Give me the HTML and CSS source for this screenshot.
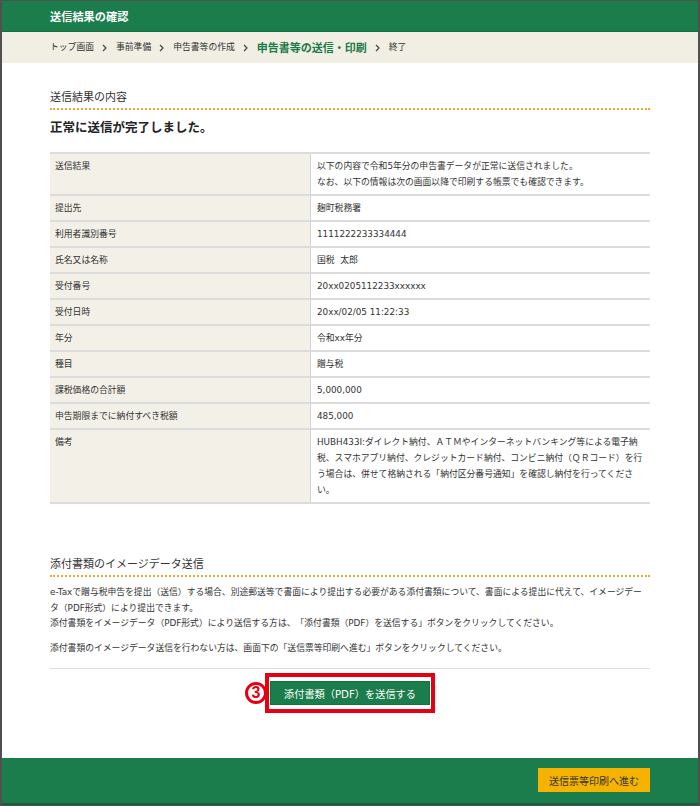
FILE: index.html
```html
<!DOCTYPE html>
<html lang="ja">
<head>
<meta charset="utf-8">
<title>送信結果の確認</title>
<link rel="stylesheet" href="styles.css">
</head>
<body>
<div class="page">
  <header class="titlebar">送信結果の確認</header>
  <nav class="crumbs">
    <span class="crumb">トップ画面</span>
    <svg class="sep" width="5" height="8" viewBox="0 0 5 8"><polyline points="1,1 4,4 1,7" fill="none" stroke="#444" stroke-width="1.2"/></svg>
    <span class="crumb">事前準備</span>
    <svg class="sep" width="5" height="8" viewBox="0 0 5 8"><polyline points="1,1 4,4 1,7" fill="none" stroke="#444" stroke-width="1.2"/></svg>
    <span class="crumb">申告書等の作成</span>
    <svg class="sep" width="5" height="8" viewBox="0 0 5 8"><polyline points="1,1 4,4 1,7" fill="none" stroke="#444" stroke-width="1.2"/></svg>
    <span class="crumb current">申告書等の送信・印刷</span>
    <svg class="sep" width="5" height="8" viewBox="0 0 5 8"><polyline points="1,1 4,4 1,7" fill="none" stroke="#444" stroke-width="1.2"/></svg>
    <span class="crumb">終了</span>
  </nav>
  <main class="content">
    <section class="sec sec-result">
      <h2 class="sec-title">送信結果の内容</h2>
      <p class="lead">正常に送信が完了しました。</p>
      <table class="result">
        <tr><td class="lbl">送信結果</td><td class="val">以下の内容で令和5年分の申告書データが正常に送信されました。<br>なお、以下の情報は次の画面以降で印刷する帳票でも確認できます。</td></tr>
        <tr><td class="lbl">提出先</td><td class="val">麹町税務署</td></tr>
        <tr><td class="lbl">利用者識別番号</td><td class="val">1111222233334444</td></tr>
        <tr><td class="lbl">氏名又は名称</td><td class="val">国税&nbsp;&nbsp;太郎</td></tr>
        <tr><td class="lbl">受付番号</td><td class="val">20xx0205112233xxxxxx</td></tr>
        <tr><td class="lbl">受付日時</td><td class="val">20xx/02/05 11:22:33</td></tr>
        <tr><td class="lbl">年分</td><td class="val">令和xx年分</td></tr>
        <tr><td class="lbl">種目</td><td class="val">贈与税</td></tr>
        <tr><td class="lbl">課税価格の合計額</td><td class="val">5,000,000</td></tr>
        <tr><td class="lbl">申告期限までに納付すべき税額</td><td class="val">485,000</td></tr>
        <tr><td class="lbl">備考</td><td class="val">HUBH433I:ダイレクト納付、ＡＴＭやインターネットバンキング等による電子納税、スマホアプリ納付、クレジットカード納付、コンビニ納付（ＱＲコード）を行う場合は、併せて格納される「納付区分番号通知」を確認し納付を行ってください。</td></tr>
      </table>
    </section>
    <section class="sec sec-attach">
      <h2 class="sec-title">添付書類のイメージデータ送信</h2>
      <p class="txt">e-Taxで贈与税申告を提出（送信）する場合、別途郵送等で書面により提出する必要がある添付書類について、書面による提出に代えて、イメージデータ（PDF形式）により提出できます。<br>添付書類をイメージデータ（PDF形式）により送信する方は、「添付書類（PDF）を送信する」ボタンをクリックしてください。</p>
      <p class="txt gap">添付書類のイメージデータ送信を行わない方は、画面下の「送信票等印刷へ進む」ボタンをクリックしてください。</p>
      <div class="actions">
        <div class="highlight">
          <span class="mark">3</span>
          <button class="btn-green" type="button">添付書類（PDF）を送信する</button>
        </div>
      </div>
    </section>
  </main>
  <footer class="footbar">
    <button class="btn-yellow" type="button">送信票等印刷へ進む</button>
  </footer>
</div>
</body>
</html>
```

FILE: styles.css
```css
* { box-sizing: border-box; }

html, body {
  margin: 0;
  padding: 0;
  background: #ffffff;
}

body {
  font-family: "DejaVu Sans", "Noto Sans CJK JP", sans-serif;
  color: #333333;
  text-spacing-trim: space-all;
}

.page {
  height: 806px;
  border-style: solid;
  border-color: #505050;
  border-width: 1px 2px 1px 2px;
  display: flex;
  flex-direction: column;
  background: #ffffff;
}

.titlebar {
  height: 31px;
  background: #1b7d4b;
  border-bottom: 1px solid #15703f;
  color: #ffffff;
  font-family: "Noto Sans CJK JP", sans-serif;
  font-weight: 700;
  font-size: 11.2px;
  display: flex;
  align-items: center;
  padding-left: 48px;
}

.crumbs {
  height: 31px;
  background: #f1eee4;
  display: flex;
  align-items: center;
  padding-left: 48px;
  font-family: "Noto Sans CJK JP", sans-serif;
  font-size: 8.8px;
  color: #333333;
}

.crumb { line-height: 1; }

.crumb.current {
  font-size: 11px;
  font-weight: 700;
  color: #1b7a48;
}

.sep {
  margin: 0 9px 0 8px;
  flex: none;
}

.content {
  flex: 1;
  padding: 0 48px;
}

.sec-title {
  margin: 0;
  font-family: "Noto Sans CJK JP", sans-serif;
  font-size: 11px;
  font-weight: 400;
  line-height: 16px;
  color: #333333;
  padding-bottom: 4px;
  border-bottom: 2px dotted #eea636;
}

.sec-result .sec-title { margin-top: 25px; }

.lead {
  margin: 8px 0 16px;
  font-family: "Noto Sans CJK JP", sans-serif;
  font-size: 12.5px;
  font-weight: 700;
  line-height: 18px;
  color: #222222;
}

.result {
  width: 100%;
  table-layout: fixed;
  border-collapse: separate;
  border-spacing: 0;
  border-top: 2px solid #dcdcdc;
  font-size: 8.8px;
  line-height: 16px;
}

.result td {
  vertical-align: top;
  border-bottom: 2px solid #dcdcdc;
  padding: 4px 6px;
}

.result td.lbl {
  width: 260px;
  background: #f2f0e7;
  padding-left: 5px;
}

.result td.val {
  background: #ffffff;
  border-left: 1px solid #d2d2d2;
}

.sec-attach .sec-title { margin-top: 51px; }

.txt {
  margin: 8px 0 0;
  font-size: 8.8px;
  line-height: 15.5px;
}

.txt.gap { margin-top: 9px; }

.actions {
  margin-top: 12px;
  border-top: 1px solid #dddddd;
  padding-top: 4px;
  display: flex;
  justify-content: center;
}

.highlight {
  position: relative;
  border: 4px solid #e60012;
  padding: 4px 1px;
  display: flex;
}

.mark {
  position: absolute;
  right: calc(100% + 2px);
  top: 50%;
  transform: translateY(-50%);
  width: 22px;
  height: 22px;
  border: 3px solid #e60012;
  border-radius: 50%;
  display: flex;
  align-items: center;
  justify-content: center;
  font-family: "Liberation Sans", sans-serif;
  font-size: 16px;
  font-weight: 700;
  line-height: 1;
  color: #e60012;
  background: #ffffff;
}

.btn-green {
  width: 160px;
  height: 24px;
  margin: 0;
  border: 1px solid #17713f;
  background: #1b7d4b;
  color: #ffffff;
  font-family: "DejaVu Sans", "Noto Sans CJK JP", sans-serif;
  font-size: 10.2px;
  padding: 0;
  cursor: pointer;
}

.footbar {
  height: 47px;
  background: #1b7d4b;
  border-bottom: 2px solid #12613a;
  display: flex;
  justify-content: flex-end;
  align-items: flex-start;
  padding: 10px 48px 0 0;
}

.btn-yellow {
  width: 112px;
  height: 24px;
  margin: 0;
  border: none;
  background: #f5b300;
  color: #333333;
  font-family: "Noto Sans CJK JP", sans-serif;
  font-size: 10px;
  padding: 0;
  cursor: pointer;
}
```
